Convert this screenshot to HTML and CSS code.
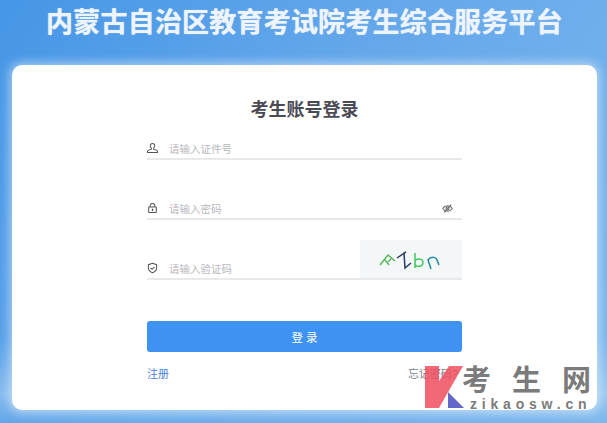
FILE: index.html
```html
<!DOCTYPE html>
<html lang="zh">
<head>
<meta charset="utf-8">
<title>考生账号登录</title>
<link rel="stylesheet" href="styles.css">
</head>
<body>
<div class="page">
  <h1 class="site-title">内蒙古自治区教育考试院考生综合服务平台</h1>
  <main class="card">
    <h2 class="card-title">考生账号登录</h2>
    <form class="form">
      <div class="field">
        <svg class="icon" viewBox="0 0 12 12"><path d="M6 1a2.4 2.4 0 0 0-2.4 2.600c0 1.300.5 2 1.200 2.600v1L1.300 8.600c-.5.3-.8.6-.8 1.100v1.300h11V9.700c0-.5-.3-.8-.8-1.100L7.200 7.200v-1c.7-.6 1.200-1.300 1.200-2.600A2.400 2.400 0 0 0 6 1z"/></svg>
        <span class="ph">请输入证件号</span>
      </div>
      <div class="field">
        <svg class="icon" viewBox="0 0 12 12"><path d="M3.500 5V3.500a2.500 2.500 0 0 1 5 0V5"/><rect x="1.800" y="5" width="8.400" height="6" rx=".6"/><rect class="solid" x="5.300" y="6.800" width="1.400" height="2.400"/></svg>
        <span class="ph">请输入密码</span>
        <svg class="eye" viewBox="0 0 12 12"><path d="M.7 6C2 4 3.900 3 6 3s4 1 5.300 3C10 8 8.100 9 6 9S2 8 .7 6z"/><circle cx="6" cy="6" r="1.700"/><path d="M2.300 10.300l7.800-8.600"/></svg>
      </div>
      <div class="field">
        <svg class="icon" viewBox="0 0 12 12"><path d="M6 .8l4.500 1.600v3.400c0 2.700-2 4.400-4.500 5.400-2.500-1-4.500-2.700-4.500-5.400V2.400z"/><path d="M3.900 5.800l1.600 1.600 2.700-2.700"/></svg>
        <span class="ph">请输入验证码</span>
        <svg class="captcha" viewBox="0 0 102 38">
          <path class="c1" d="M20 25l8-10 7 6M25 20l4 5M28 22l4-4"/>
          <path class="c2" d="M37 18l9-6-2 1 1 15 6-5"/>
          <path class="c3" d="M55 13v15M55 21c1-3 8-3 8 1.500s-7 5-8 2"/>
          <path class="c4" d="M71 29l-3-9c3-4 8-3 9 0l2 5"/>
        </svg>
      </div>
      <button class="submit" type="button">登 录</button>
      <div class="links">
        <a class="link-reg">注册</a>
        <a class="link-forgot">忘记密码?</a>
      </div>
    </form>
  </main>
  <div class="mark">
    <svg class="mark-logo" viewBox="0 0 40 43">
      <path class="k-red" d="M0 0h14v15L24 0h14L14 42H0z"/>
      <path class="k-blue" d="M23 26l16 16H23z"/>
    </svg>
    <div class="mark-text">
      <div class="mark-cn"><span>考</span><span>生</span><span>网</span></div>
      <div class="mark-en">zikaosw.cn</div>
    </div>
  </div>
</div>
</body>
</html>
```
FILE: styles.css
```css
* { box-sizing: border-box; }
html, body { margin: 0; padding: 0; }
body { font-family: "Liberation Sans", "Noto Sans CJK SC", sans-serif; }
.page {
  position: relative;
  width: 607px;
  height: 423px;
  overflow: hidden;
  padding: 8px 10px 0 12px;
  background:
    linear-gradient(180deg, rgba(255, 255, 255, 0) 80%, rgba(190, 220, 245, .45) 93%, rgba(120, 180, 232, .2) 100%),
    linear-gradient(125deg, #4596e6 0%, #62a6ea 40%, #7db8ee 100%);
}
.site-title {
  margin: 0 0 27px;
  height: 30px;
  line-height: 30px;
  text-align: center;
  font-size: 27px;
  letter-spacing: .2px;
  font-weight: 700;
  color: #eef4fd;
  text-shadow: 0 0 1px rgba(240, 246, 255, .8);
  white-space: nowrap;
}
.card {
  width: 585px;
  height: 345px;
  padding-top: 33px;
  background: #fff;
  border-radius: 10px;
  box-shadow: 0 0 10px 3px rgba(255, 255, 255, .45);
}
.card-title {
  margin: 0 0 8px;
  height: 24px;
  line-height: 24px;
  text-align: center;
  font-size: 18px;
  font-weight: 700;
  color: #4a4a55;
}
.form { width: 315px; margin-left: 135px; }
.field {
  display: flex;
  align-items: center;
  height: 30px;
  padding-top: 8px;
  margin-bottom: 30px;
  border-bottom: 2px solid #e9e9eb;
  position: relative;
}
.icon {
  width: 11px;
  height: 12px;
  margin-right: 11px;
  flex: none;
  fill: none;
  stroke: #555;
  stroke-width: 1.100;
}
.icon .solid { fill: #444; stroke: none; }
.ph { font-size: 10.500px; color: #b8b8bd; }
.eye {
  width: 11px;
  height: 11px;
  margin-left: auto;
  margin-right: 9px;
  fill: none;
  stroke: #666;
  stroke-width: 1.100;
}
.captcha {
  position: absolute;
  right: 0;
  bottom: 0;
  width: 102px;
  height: 38px;
  background: #f3f7f8;
  fill: none;
  stroke-width: 1.500;
}
.c1 { stroke: #5cb85c; }
.c2 { stroke: #2b3a67; }
.c3 { stroke: #42c85c; }
.c4 { stroke: #1b8a9a; }
.submit {
  display: block;
  width: 315px;
  height: 31px;
  margin-top: 41px;
  border: 0;
  border-radius: 3px;
  background: #3e92f2;
  color: #fff;
  font: 11.500px "Liberation Sans", "Noto Sans CJK SC", sans-serif;
}
.links {
  display: flex;
  justify-content: space-between;
  margin-top: 15px;
  font-size: 11px;
  line-height: 15px;
}
.link-reg { color: #4a80dc; }
.link-forgot { color: #7a7f8c; padding-right: 4px; }
.mark {
  position: absolute;
  left: 425px;
  top: 366px;
  display: flex;
  width: 182px;
}
.mark-logo { width: 40px; height: 43px; flex: none; }
.k-red { fill: #f04d5e; fill-opacity: .85; }
.k-blue { fill: #6268c8; }
.mark-text { color: #7b7b7b; }
.mark-cn {
  display: flex;
  gap: 21px;
  font-family: "Noto Sans CJK SC", sans-serif;
  font-size: 29px;
  height: 31px;
  line-height: 25px;
  font-weight: 700;
  margin-left: -3px;
  white-space: nowrap;
}
.mark-en {
  padding-left: 5px;
  font-size: 14px;
  font-weight: 700;
  line-height: 14px;
  letter-spacing: 4.800px;
  white-space: nowrap;
}
```
